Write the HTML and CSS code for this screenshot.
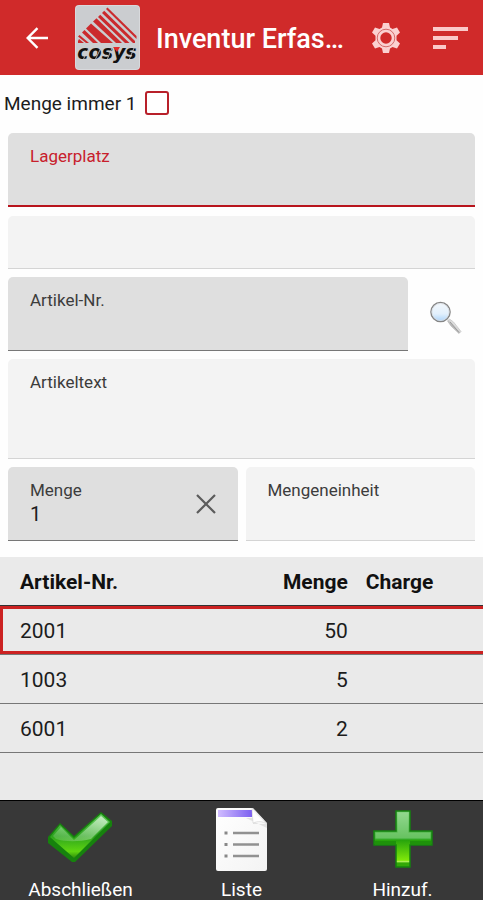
FILE: index.html
```
<!DOCTYPE html>
<html lang="de">
<head>
    <meta charset="UTF-8">
    <meta name="viewport" content="width=device-width, initial-scale=1.0">
    <title>Inventur Erfassung</title>
    <link rel="stylesheet" href="styles.css">
</head>
<body>
    <header class="app-bar">
        <button class="icon-btn back-btn" type="button" aria-label="Zurück">
            <svg width="24" height="24" viewBox="0 0 24 24" fill="none" stroke="#fff" stroke-width="2.4">
                <path d="M23 12H3M12.5 2.2L2.7 12l9.8 9.8"/>
            </svg>
        </button>
        <svg class="logo" width="65" height="65" viewBox="0 0 65 65">
            <rect width="65" height="65" rx="4" fill="#d8d9dc"/>
            <rect x="1" y="1" width="63" height="63" rx="3" fill="#cbcdd0"/>
            <g fill="#cb2a2d">
                <path d="M31 4l1.5-1.5L61.5 31v3z"/>
                <path d="M27 8l2.2-2.2L60 36v2h-2z"/>
                <path d="M23 12l2.200-2.200L54.500 38H50z"/>
                <path d="M18 16.500l3.500-3.300L47 38h-6z"/>
                <path d="M11 23.500l5-5L38 38H26z"/>
                <path d="M3 31.500l1.500-1.500L14 38h-3z"/>
                <path d="M7 27.500l2.500-2.500L23 38h-5z"/>
                <path d="M3 36l1-2 5 4H3z"/>
            </g>
            <text class="logo-text" x="32" y="54" text-anchor="middle">cosys</text>
            <path d="M38 42h7l-3 5z" fill="#e02a2d"/>
            <path d="M8 55l6-12M20 55l6-12M32 55l5-12M54 55l5-12" stroke="#cbcdd0" stroke-width="0.800"/>
        </svg>
        <h1 class="title">Inventur Erfas…</h1>
        <button class="icon-btn settings-btn" type="button" aria-label="Einstellungen">
            <svg width="30" height="32" viewBox="0 0 30 32">
                <path fill="#fbd0d0" fill-rule="evenodd" d="M12 1h6l1 4.500 2.500 1.400 4.500-1.500 3 5.200-3.500 3.200v4.400l3.500 3.200-3 5.200-4.500-1.500-2.500 1.400-1 4.500h-6l-1-4.500-2.500-1.400L4 26.600l-3-5.200 3.500-3.200v-4.400L1 10.600l3-5.200 4.500 1.500L11 5.500zM15 10.300a5.700 5.700 0 1 0 0 11.400a5.700 5.700 0 1 0 0-11.400z"/>
                <circle cx="15" cy="16" r="8.800" fill="none" stroke="#d46a6a" stroke-width="1"/>
            </svg>
        </button>
        <button class="icon-btn menu-btn" type="button" aria-label="Menü">
            <svg width="35" height="24" viewBox="0 0 35 24" fill="#fbc9c9">
                <path d="M0 1h35v4H0zM0 10h25v4H0zM0 19h13v4H0z"/>
            </svg>
        </button>
    </header>

    <main class="content">
        <form class="entry-form">
            <div class="check-row">
                <label for="always-one">Menge immer 1</label>
                <input type="checkbox" id="always-one">
            </div>

            <div class="field active">
                <label for="lagerplatz">Lagerplatz</label>
                <input type="text" id="lagerplatz">
            </div>

            <div class="field readonly no-label">
                <input type="text" aria-label="Lagerplatz Bezeichnung" readonly>
            </div>

            <div class="article-row">
                <div class="field">
                    <label for="artikel">Artikel-Nr.</label>
                    <input type="text" id="artikel">
                </div>
                <button class="icon-btn" type="button" aria-label="Artikel suchen">
                    <svg width="32" height="34" viewBox="0 0 32 34">
                        <defs>
                            <linearGradient id="lens" x1="0" y1="0" x2="0" y2="1">
                                <stop offset="0" stop-color="#f4f8fc"/>
                                <stop offset="0.6" stop-color="#e2f0fc"/>
                                <stop offset="1" stop-color="#a9d2fa"/>
                            </linearGradient>
                            <linearGradient id="handle" x1="0" y1="1" x2="1" y2="0">
                                <stop offset="0.300" stop-color="#999"/>
                                <stop offset="0.600" stop-color="#e8e8e8"/>
                            </linearGradient>
                        </defs>
                        <path d="M17.500 20l2-2 4 3 7.500 9.500-2 2-8-7.500z" fill="url(#handle)" stroke="#b5b5b5" stroke-width="0.600"/>
                        <path d="M20 21l9 10.500" stroke="#999" stroke-width="1"/>
                        <circle cx="10.500" cy="11" r="9.600" fill="url(#lens)" stroke="#858585" stroke-width="1.400"/>
                        <circle cx="10.500" cy="11" r="8.500" fill="none" stroke="#d9dde2" stroke-width="0.800"/>
                    </svg>
                </button>
            </div>

            <div class="field readonly">
                <label for="artikeltext">Artikeltext</label>
                <textarea id="artikeltext" readonly></textarea>
            </div>

            <div class="amount-row">
                <div class="field">
                    <label for="menge">Menge</label>
                    <input type="text" id="menge" value="1">
                    <button class="icon-btn clear-btn" type="button" aria-label="Menge löschen">
                        <svg width="20" height="20" viewBox="0 0 20 20" stroke="#5c5c5c" stroke-width="2.200">
                            <path d="M1 1l18 18M19 1L1 19"/>
                        </svg>
                    </button>
                </div>
                <div class="field readonly">
                    <label for="einheit">Mengeneinheit</label>
                    <input type="text" id="einheit" readonly>
                </div>
            </div>
        </form>

        <div class="table-area">
            <table class="items">
                <thead>
                    <tr>
                        <th class="col-article">Artikel-Nr.</th>
                        <th class="col-amount">Menge</th>
                        <th class="col-charge">Charge</th>
                    </tr>
                </thead>
                <tbody>
                    <tr class="selected">
                        <td>2001</td>
                        <td class="col-amount">50</td>
                        <td></td>
                    </tr>
                    <tr>
                        <td>1003</td>
                        <td class="col-amount">5</td>
                        <td></td>
                    </tr>
                    <tr>
                        <td>6001</td>
                        <td class="col-amount">2</td>
                        <td></td>
                    </tr>
                </tbody>
            </table>
        </div>
    </main>

    <footer class="bottom-bar">
        <button class="action" type="button">
            <svg width="66" height="60" viewBox="1 1 66 60">
                <defs>
                    <linearGradient id="check" x1="0" y1="0" x2="0" y2="1">
                        <stop offset="0" stop-color="#66cc60"/>
                        <stop offset="0.500" stop-color="#2ca31e"/>
                        <stop offset="0.850" stop-color="#5ed510"/>
                        <stop offset="1" stop-color="#2f8f0c"/>
                    </linearGradient>
                    <linearGradient id="shine" x1="0" y1="1" x2="1" y2="0">
                        <stop offset="0" stop-color="#a6dea0" stop-opacity="0.300"/>
                        <stop offset="1" stop-color="#f2fcf0"/>
                    </linearGradient>
                </defs>
                <path d="M1 31l12-14 14 13L54 6l11 9v5L28 56h-3L1 37z" fill="#16820d"/>
                <path d="M3 31l10-12 14 13L54 8l9 8-36 36z" fill="url(#check)"/>
                <path d="M6 30l8-9 13 13L54 10l7 6-17 17c-12 3-26 3-35 0z" fill="url(#shine)" opacity="0.750"/>
            </svg>
            <span>Abschließen</span>
        </button>
        <button class="action" type="button">
            <svg width="54" height="66" viewBox="0 1 54 66">
                <defs>
                    <linearGradient id="purple">
                        <stop offset="0" stop-color="#d0bcff"/>
                        <stop offset="1" stop-color="#7c60f0"/>
                    </linearGradient>
                    <linearGradient id="sheet" x1="0" y1="0" x2="1" y2="1">
                        <stop offset="0" stop-color="#fff"/>
                        <stop offset="1" stop-color="#f3f3f3"/>
                    </linearGradient>
                    <linearGradient id="fold" x1="0" y1="1" x2="1" y2="0">
                        <stop offset="0.400" stop-color="#fff"/>
                        <stop offset="1" stop-color="#cfcfcf"/>
                    </linearGradient>
                </defs>
                <path d="M3 2h35l14 15v46q0 2-2 2H3q-2 0-2-2V4q0-2 2-2z" fill="url(#sheet)"/>
                <path d="M3 4h34v7H3z" fill="url(#purple)"/>
                <path d="M31 12h7v6h14v4z" fill="#e2e2e2"/>
                <path d="M37 2l15 16c-5-3-9-3-14-1z" fill="url(#fold)" stroke="#d2d2d2" stroke-width="0.600"/>
                <path d="M18 27h26M18 38.500h26M18 50h26" stroke="#919191" stroke-width="2.600"/>
                <path d="M9.500 27h3M9.500 38.500h3M9.500 50h3" stroke="#888" stroke-width="3"/>
            </svg>
            <span>Liste</span>
        </button>
        <button class="action" type="button">
            <svg width="60" height="62" viewBox="0 -2 60 62">
                <defs>
                    <linearGradient id="plus" x1="0" y1="0" x2="0" y2="1">
                        <stop offset="0" stop-color="#7fd07c"/>
                        <stop offset="0.500" stop-color="#3cae34"/>
                        <stop offset="0.520" stop-color="#27a40c"/>
                        <stop offset="0.880" stop-color="#7fe80a"/>
                        <stop offset="0.900" stop-color="#b4f45c"/>
                        <stop offset="0.930" stop-color="#32a808"/>
                    </linearGradient>
                </defs>
                <path d="M23 2h14v20h22v14H37v22H23V36H1V22h22z" fill="url(#plus)" stroke="#15820f" stroke-width="1.500"/>
                <path d="M2.500 23.500H24.500V3.500h11v20h22v6H2.500z" fill="#c6efc2" opacity="0.300"/>
                <path d="M2 32h21v3H2zM37 32h21v3H37z" fill="#1e920a"/>
            </svg>
            <span>Hinzuf.</span>
        </button>
    </footer>
</body>
</html>
```

FILE: styles.css
```
* {
    margin: 0;
    padding: 0;
    box-sizing: border-box;
    font-family: Roboto, sans-serif;
}

body {
    display: flex;
    flex-direction: column;
    min-height: 100vh;
    background: #fefefe;
    color: #1c1c1c;
}

button {
    border: none;
    background: none;
    cursor: pointer;
}

.icon-btn {
    display: flex;
    justify-content: center;
    align-items: center;
}

/* Top bar */
.app-bar {
    display: flex;
    align-items: center;
    height: 75px;
    padding: 0 15px 0 25px;
    background: #d02a2a;
    color: white;
}

.logo {
    flex: none;
    margin: 0 16px 0 26px;
}

.logo-text {
    font-family: "DejaVu Sans", sans-serif;
    font-size: 19px;
    font-weight: 700;
    font-style: italic;
    fill: #111;
}

.title {
    flex: 1;
    padding-top: 2px;
    font-size: 27px;
    font-weight: 500;
    white-space: nowrap;
}

.menu-btn {
    margin-left: 32px;
}

.content {
    flex: 1;
    display: flex;
    flex-direction: column;
}

/* Form */
.entry-form {
    display: flex;
    flex-direction: column;
    gap: 8px;
    padding: 0 8px 16px;
}

.check-row {
    display: flex;
    align-items: center;
    gap: 9px;
    height: 50px;
    padding-top: 6px;
    margin-left: -4px;
    font-size: 19px;
}

.check-row input {
    appearance: none;
    width: 24px;
    height: 24px;
    border: 2px solid #b8202a;
    border-radius: 3px;
    background: white;
}

.check-row input:checked {
    background: #b8202a;
}

.field {
    position: relative;
    padding: 13px 22px 12px;
    border-bottom: 1px solid #777;
    border-radius: 5px 5px 0 0;
    background: #dfdfdf;
}

.field label {
    display: block;
    font-size: 17px;
    line-height: 20px;
    color: #3c3c3c;
}

.field input,
.field textarea {
    display: block;
    width: 100%;
    height: 28px;
    border: none;
    outline: none;
    background: none;
    font-size: 20px;
    color: #1c1c1c;
    resize: none;
}

.field textarea {
    height: 54px;
}

.field.active {
    padding-bottom: 11px;
    border-bottom: 2px solid #b8141c;
}

.field.active label {
    color: #c8202c;
}

.field.readonly {
    border-bottom-color: #d4d4d4;
    background: #f3f3f3;
}

.field.no-label {
    margin-top: 1px;
    padding-top: 12px;
}

.article-row {
    display: grid;
    grid-template-columns: 1fr 59px;
    gap: 8px;
}

.article-row .icon-btn {
    padding-top: 7px;
}

.amount-row {
    display: grid;
    grid-template-columns: 1fr 1fr;
    gap: 8px;
}

.clear-btn {
    position: absolute;
    top: 0;
    right: 22px;
    height: 100%;
}

/* Table */
.table-area {
    flex: 1;
    background: #eaeaea;
}

.items {
    width: 100%;
    border-spacing: 0;
    table-layout: fixed;
    font-size: 21px;
}

.items th,
.items td {
    height: 49px;
    padding: 2px 0 0 20px;
    border-bottom: 1px solid #777;
    text-align: left;
}

.items th {
    border-bottom-color: #333;
    font-weight: 700;
    color: #111;
}

.items .col-amount {
    width: 24%;
    padding-left: 0;
    text-align: right;
}

.items .col-charge {
    width: 28%;
    padding-left: 18px;
}

.selected {
    box-shadow: inset 3px 3px #cc2222, inset 0 -4px #cc2222;
}

/* Bottom bar */
.bottom-bar {
    display: grid;
    grid-template-columns: repeat(3, 1fr);
    height: 100px;
    border-top: 1px solid #000;
    background: #383838;
}

.action {
    display: flex;
    flex-direction: column;
    justify-content: space-between;
    align-items: center;
    padding-top: 6px;
    font-size: 19px;
    line-height: 21px;
    color: white;
}
```
